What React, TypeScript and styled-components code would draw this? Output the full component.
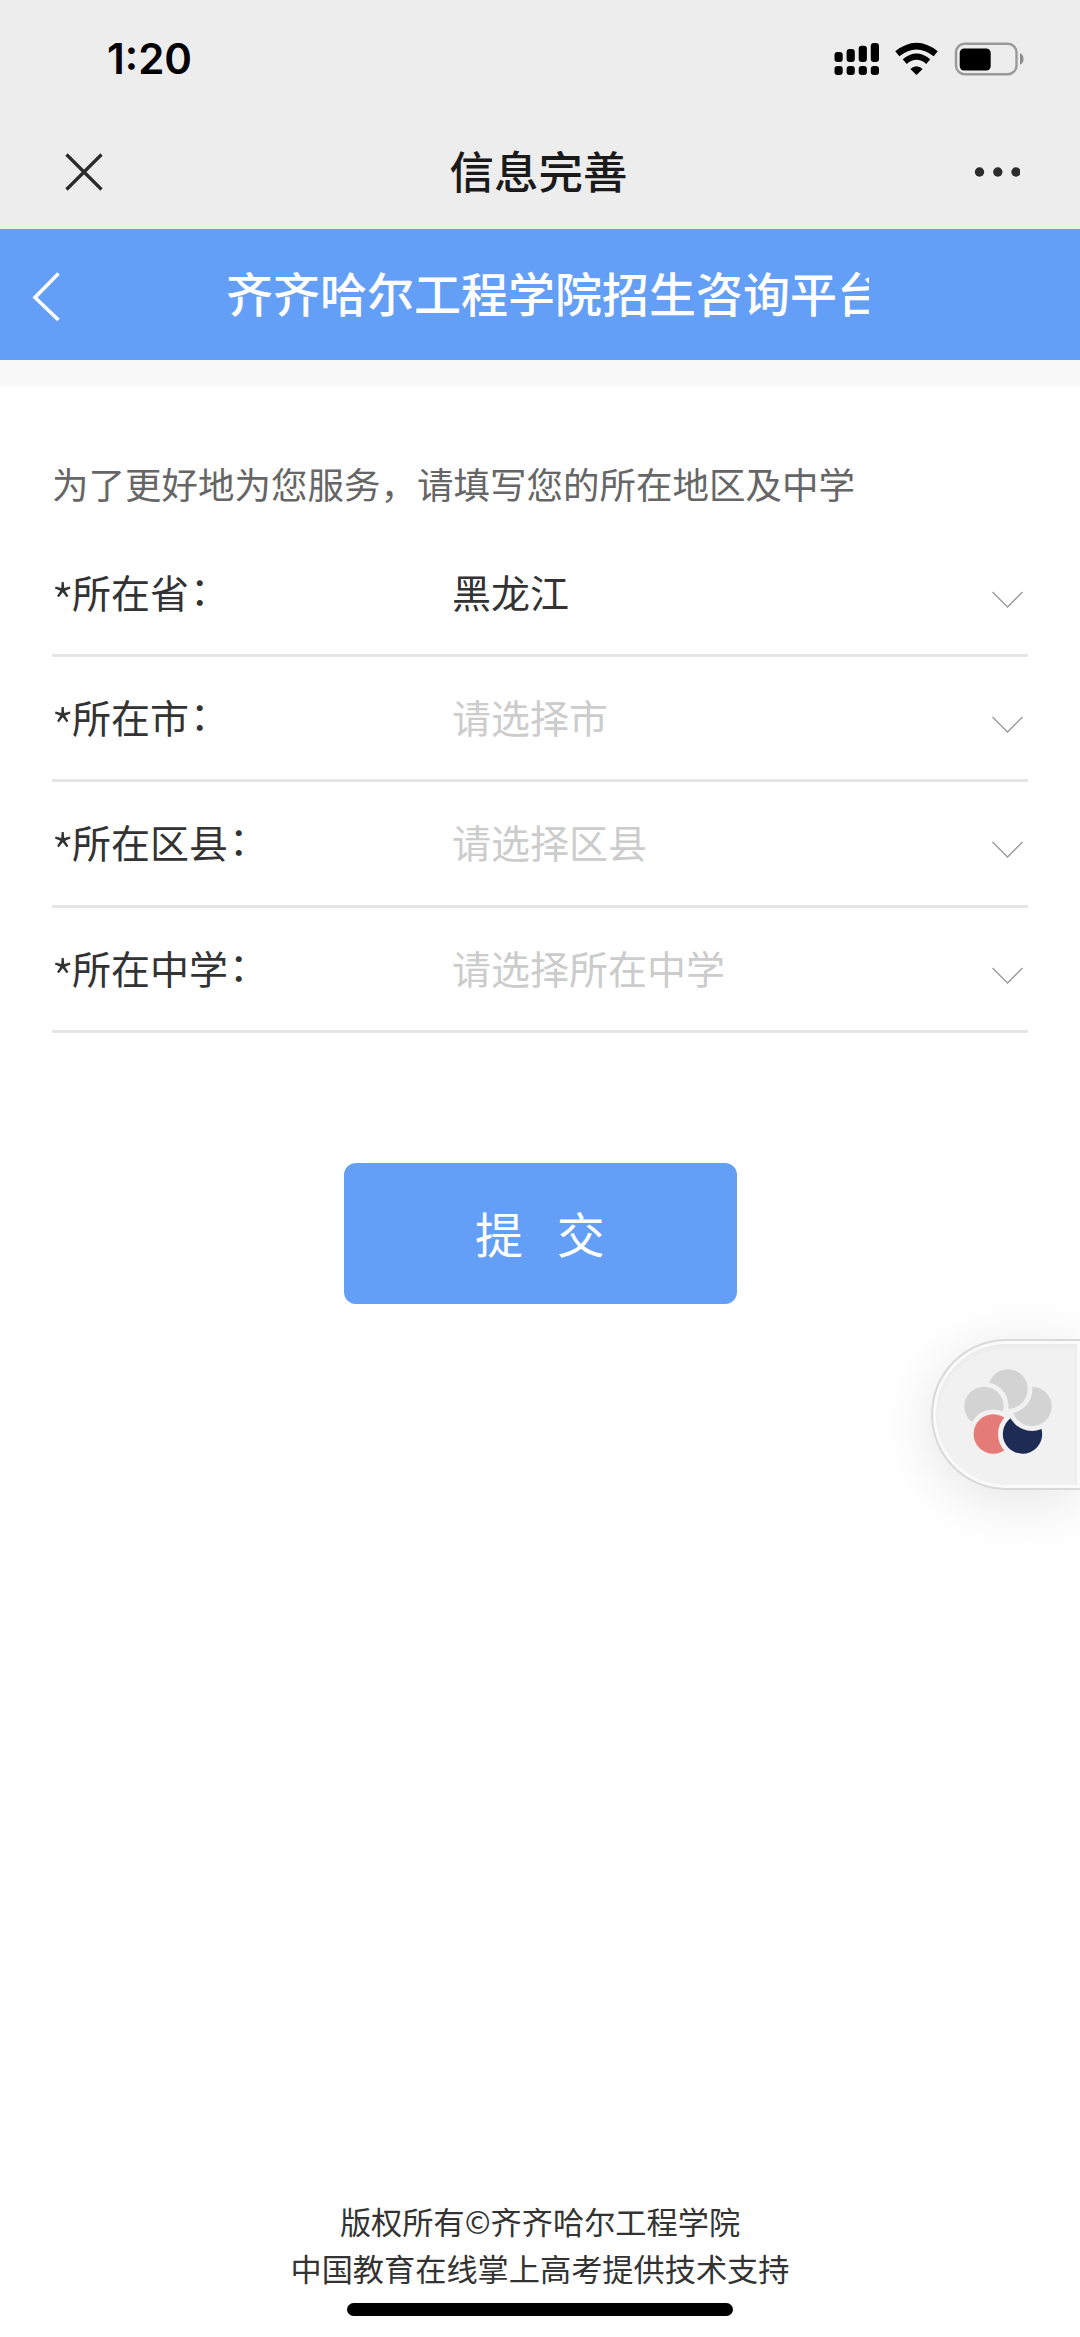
import React from 'react';
import styled, { createGlobalStyle } from 'styled-components';

const GlobalStyle = createGlobalStyle`
  * { box-sizing: border-box; }
  body {
    margin: 0;
    background: #fff;
    font-family: "Noto Sans CJK SC", sans-serif;
  }
`;

const Screen = styled.div`
  width: 1080px;
  height: 2337px;
  display: flex;
  flex-direction: column;
  background: #fff;
  overflow: hidden;
`;

const SystemArea = styled.header`
  height: 229px;
  background: #ededed;
  flex: none;
`;

const StatusBar = styled.div`
  height: 117px;
  padding: 0 56px 0 107px;
  display: flex;
  align-items: center;
  justify-content: space-between;
`;

const Clock = styled.span`
  font: 600 42px/60px Inter, sans-serif;
  color: #000;
`;

const StatusIcons = styled.div`
  display: flex;
  align-items: center;
  gap: 16px;
  height: 34px;
`;

const NavBar = styled.div`
  height: 109px;
  padding: 0 60px;
  display: grid;
  grid-template-columns: 60px 1fr 60px;
  align-items: center;
`;

const NavTitle = styled.h1`
  margin: 0;
  padding: 0 3px 3px 0;
  font-size: 44.5px;
  line-height: 64px;
  font-weight: 500;
  text-align: center;
  color: #1a1a1a;
`;

const PlatformBar = styled.div`
  height: 131px;
  flex: none;
  display: flex;
  align-items: center;
  background: #639ef7;
  padding-left: 30px;
`;

const PlatformTitle = styled.h2`
  margin: 0 0 0 164px;
  padding-bottom: 5px;
  width: 643px;
  overflow: hidden;
  white-space: nowrap;
  color: #fff;
  font-size: 47px;
  line-height: 68px;
  font-weight: 500;
`;

const Divider = styled.div`
  height: 26px;
  flex: none;
  background: #f8f8f8;
`;

const Form = styled.main`
  flex: 1;
  padding: 70px 52px 0;
  display: flex;
  flex-direction: column;
`;

const Intro = styled.p`
  margin: 0;
  height: 76px;
  font-size: 36.5px;
  line-height: 56px;
  color: #666;
  white-space: nowrap;
`;

const Row = styled.div`
  height: 125.2px;
  padding-bottom: 4px;
  display: grid;
  grid-template-columns: 400px 1fr 37px;
  align-items: center;
  border-bottom: 3px solid #e5e5e5;
  font-size: 39px;
  line-height: 56px;
  color: #333;
`;

const Label = styled.span`
  display: flex;
  height: 56px;
`;

const Star = styled.span`
  width: 21px;
  margin-left: -1px;
  font-size: 53px;
  font-weight: 300;
  line-height: 76px;
`;

const Colon = styled.span`
  margin: -3px 0 0 1px;
`;

const Value = styled.span<{ $empty?: boolean }>`
  color: ${(p) => (p.$empty ? '#ccc' : '#333')};
`;

const Submit = styled.button`
  align-self: center;
  margin-top: 130px;
  width: 393px;
  height: 141px;
  padding: 0 0 2px;
  border: 0;
  border-radius: 12px;
  background: #639ef7;
  color: #fff;
  font: 400 48px/70px "Noto Sans CJK SC", sans-serif;
  word-spacing: 23px;
`;

const Footer = styled.footer`
  flex: none;
  height: 140px;
  display: flex;
  flex-direction: column;
  align-items: center;
  font-size: 31.2px;
  line-height: 47px;
  color: #333;
`;

const HomeIndicator = styled.div`
  width: 386px;
  height: 13px;
  margin-top: 12px;
  border-radius: 7px;
  background: #000;
`;

const FloatingButton = styled.div`
  position: absolute;
  left: 931px;
  top: 1339px;
  width: 149px;
  height: 151px;
  border: 2px solid #d9d9d9;
  border-right: 0;
  border-radius: 76px 0 0 76px;
  background: #fafafa;
  padding: 3px;
  box-shadow: 0 10px 60px rgba(0, 0, 0, 0.11);
`;

const FloatingInner = styled.div`
  height: 100%;
  border-radius: 71px 0 0 71px;
  background: #f1f1f1;
  box-shadow: inset 0 3px 5px rgba(0, 0, 0, 0.03);
  display: flex;
  align-items: center;
  padding: 0 0 5px 28px;
`;

const Clip = styled.div`
  position: absolute;
  left: 0;
  top: 0;
  width: 1080px;
  height: 2337px;
  overflow: hidden;
  pointer-events: none;
`;

const SignalIcon = () => (
  <svg width="45" height="34" viewBox="834 41 45 34">
    {[51, 48, 44.7, 42].map((top, i) => (
      <g key={top}>
        <rect x={834.5 + i * 12.1} y={top} width="8.2" height={61 - top} rx="3" />
        <rect x={834.5 + i * 12.1} y="65" width="8.2" height="9" rx="3" />
      </g>
    ))}
  </svg>
);

const WifiIcon = () => (
  <svg width="43" height="34" viewBox="0 0 43 34">
    <path d="M2.3 11.8Q21.5-3.6 40.7 11.8" fill="none" stroke="#000" strokeWidth="6.4" />
    <path d="M9.7 19.6Q21.5 9.6 33.3 19.6" fill="none" stroke="#000" strokeWidth="6.2" />
    <path d="M15.3 27Q21.5 21.5 27.7 27L21.5 33Z" />
  </svg>
);

const BatteryIcon = () => (
  <svg width="70" height="34" viewBox="954 41.5 70 34">
    <rect x="956" y="43.3" width="60.5" height="30.4" rx="8.5" fill="none" stroke="#999" strokeWidth="2.4" />
    <rect x="959.7" y="48" width="31" height="22" rx="4.5" />
    <path d="M1020 52.8c2.4 1 3.6 3.2 3.6 5.7s-1.2 4.7-3.6 5.7z" fill="#8c8c8c" />
  </svg>
);

const CloseIcon = () => (
  <svg width="48" height="48" viewBox="0 0 48 48">
    <path d="M6.5 6.5l35 35M41.5 6.5l-35 35" fill="none" stroke="#2b2b2b" strokeWidth="3.3" />
  </svg>
);

const MoreIcon = () => (
  <svg width="60" height="20" viewBox="957.5 162 60 20" fill="#2b2b2b">
    {[977, 995.3, 1013.5].map((cx) => (
      <circle key={cx} cx={cx} cy="172" r="4.7" />
    ))}
  </svg>
);

const BackIcon = () => (
  <svg width="32" height="54" viewBox="0 0 32 54">
    <path d="M28.5 5.5L5 29.5l23.5 22.5" fill="none" stroke="#fff" strokeWidth="3.6" />
  </svg>
);

const ChevronIcon = styled.svg`
  display: block;
  margin-top: 14px;
`;

const ChevronDown = () => (
  <ChevronIcon width="37" height="24" viewBox="0 0 37 24">
    <path d="M1.5 6L16.5 21L31.5 6" fill="none" stroke="#999" strokeWidth="1.3" />
  </ChevronIcon>
);

/* Each petal is notched by the next one round the ring. */
const PETALS = [
  { x: 44, y: 20, fill: '#d3d3d3' },
  { x: 20, y: 37.4, fill: '#d3d3d3' },
  { x: 29.3, y: 65, fill: '#e57b77' },
  { x: 58.5, y: 65, fill: '#1e2b55' },
  { x: 68, y: 37.4, fill: '#d3d3d3' },
];

const FlowerIcon = () => (
  <svg width="88" height="86" viewBox="0 0 88 86">
    {PETALS.map((p, i) => {
      const next = PETALS[(i + 1) % PETALS.length];
      return (
        <g key={i}>
          <mask id={`petal-${i}`} maskUnits="userSpaceOnUse" x="0" y="0" width="88" height="86">
            <rect width="88" height="86" fill="#fff" />
            <circle cx={next.x} cy={next.y} r="24.5" fill="#000" />
          </mask>
          <circle cx={p.x} cy={p.y} r="19.7" fill={p.fill} mask={`url(#petal-${i})`} />
        </g>
      );
    })}
  </svg>
);

const FIELDS = [
  { label: '所在省', value: '黑龙江', empty: false },
  { label: '所在市', value: '请选择市', empty: true },
  { label: '所在区县', value: '请选择区县', empty: true },
  { label: '所在中学', value: '请选择所在中学', empty: true },
];

export default function App() {
  return (
    <>
      <GlobalStyle />
      <Screen>
        <SystemArea>
          <StatusBar>
            <Clock>1:20</Clock>
            <StatusIcons>
              <SignalIcon />
              <WifiIcon />
              <BatteryIcon />
            </StatusIcons>
          </StatusBar>
          <NavBar>
            <CloseIcon />
            <NavTitle>信息完善</NavTitle>
            <MoreIcon />
          </NavBar>
        </SystemArea>
        <PlatformBar>
          <BackIcon />
          <PlatformTitle>齐齐哈尔工程学院招生咨询平台</PlatformTitle>
        </PlatformBar>
        <Divider />
        <Form>
          <Intro>为了更好地为您服务，请填写您的所在地区及中学</Intro>
          {FIELDS.map((f) => (
            <Row key={f.label}>
              <Label>
                <Star>*</Star>
                {f.label}
                <Colon>：</Colon>
              </Label>
              <Value $empty={f.empty}>{f.value}</Value>
              <ChevronDown />
            </Row>
          ))}
          <Submit>提 交</Submit>
        </Form>
        <Footer>
          <span>版权所有©齐齐哈尔工程学院</span>
          <span>中国教育在线掌上高考提供技术支持</span>
          <HomeIndicator />
        </Footer>
      </Screen>
      <Clip>
        <FloatingButton>
          <FloatingInner>
            <FlowerIcon />
          </FloatingInner>
        </FloatingButton>
      </Clip>
    </>
  );
}
